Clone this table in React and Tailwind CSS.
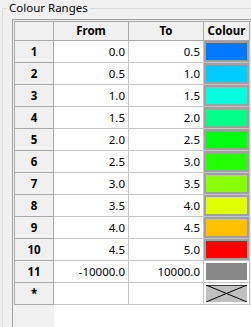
import React from "react";

// Colour range table: row number, lower bound, upper bound, swatch colour
const ranges = [
  { n: "1", from: "0.0", to: "0.5", fill: "bg-[#0078ff]" },
  { n: "2", from: "0.5", to: "1.0", fill: "bg-[#00ccff]" },
  { n: "3", from: "1.0", to: "1.5", fill: "bg-[#00ffdd]" },
  { n: "4", from: "1.5", to: "2.0", fill: "bg-[#00ff88]" },
  { n: "5", from: "2.0", to: "2.5", fill: "bg-[#00ff11]" },
  { n: "6", from: "2.5", to: "3.0", fill: "bg-[#22ff00]" },
  { n: "7", from: "3.0", to: "3.5", fill: "bg-[#88ff00]" },
  { n: "8", from: "3.5", to: "4.0", fill: "bg-[#ddff00]" },
  { n: "9", from: "4.0", to: "4.5", fill: "bg-[#ffc000]" },
  { n: "10", from: "4.5", to: "5.0", fill: "bg-[#ff0000]" },
];

function RowHeader({ children }) {
  return (
    <div className="w-[39px] shrink-0 border-r border-b border-[#a8a8a8] bg-[#f0f0f0] flex items-center justify-center font-bold">
      {children}
    </div>
  );
}

function NumCell({ children }) {
  return (
    <div className="w-[75px] shrink-0 border-r border-b border-[#c4c4c4] bg-white flex items-center justify-end pr-[3px]">
      {children}
    </div>
  );
}

function Swatch({ fill, frame }) {
  return (
    <div className="w-[46px] shrink-0 border-r border-b border-[#c4c4c4] bg-white">
      <div className={`h-full w-full p-[2px] ${frame}`}>
        <div className={`h-full w-full ${fill}`} />
      </div>
    </div>
  );
}

function EmptySwatch() {
  return (
    <div className="w-[46px] shrink-0 border-r border-b border-[#c4c4c4] bg-white p-[2px]">
      <svg width="41" height="17" viewBox="0 0 41 17" className="block">
        <rect x="0" y="0" width="41" height="17" fill="#c0c0c0" />
        <line x1="0" y1="0.5" x2="41" y2="0.5" stroke="#404040" strokeWidth="1" />
        <line x1="0" y1="0" x2="41" y2="17" stroke="#000" strokeWidth="1" />
        <line x1="0" y1="17" x2="41" y2="0" stroke="#000" strokeWidth="1" />
      </svg>
    </div>
  );
}

export default function App() {
  return (
    <div className="w-[251px] h-[327px] overflow-hidden bg-[#f0f0f0] text-[11.5px] leading-[16px] text-black font-['Noto_Sans',sans-serif]">
      <fieldset className="ml-[2px] w-[270px] h-[360px] border border-[#dcdcdc] pl-[9px] pt-[3px]">
        <legend className="ml-[-5px] px-[2px] leading-[16px]">Colour Ranges</legend>
        <div className="w-[250px] h-[330px] border border-[#a0a0a0] p-px bg-[#f0f0f0] flex flex-col">
          <div className="border-l border-t border-[#a8a8a8]">
            <div className="flex h-[19px] font-bold">
              <div className="w-[39px] shrink-0 border-r border-b border-[#a8a8a8] bg-[#f0f0f0]" />
              <div className="w-[75px] shrink-0 border-r border-b border-[#a8a8a8] bg-[#f0f0f0] flex items-center justify-center">From</div>
              <div className="w-[75px] shrink-0 border-r border-b border-[#a8a8a8] bg-[#f0f0f0] flex items-center justify-center">To</div>
              <div className="w-[46px] shrink-0 border-r border-b border-[#a8a8a8] bg-[#f0f0f0] flex items-center justify-center">Colour</div>
            </div>
            {ranges.map((r) => (
              <div key={r.n} className="flex h-[22px]">
                <RowHeader>{r.n}</RowHeader>
                <NumCell>{r.from}</NumCell>
                <NumCell>{r.to}</NumCell>
                <Swatch fill={r.fill} frame="bg-[#a0a0a0]" />
              </div>
            ))}
            <div className="flex h-[22px]">
              <RowHeader>11</RowHeader>
              <NumCell>-10000.0</NumCell>
              <NumCell>10000.0</NumCell>
              <Swatch fill="bg-[#888888]" frame="bg-white" />
            </div>
            <div className="flex h-[22px]">
              <RowHeader>*</RowHeader>
              <NumCell />
              <NumCell />
              <EmptySwatch />
            </div>
          </div>
          <div className="flex-1 ml-[40px] bg-white" />
        </div>
      </fieldset>
    </div>
  );
}
